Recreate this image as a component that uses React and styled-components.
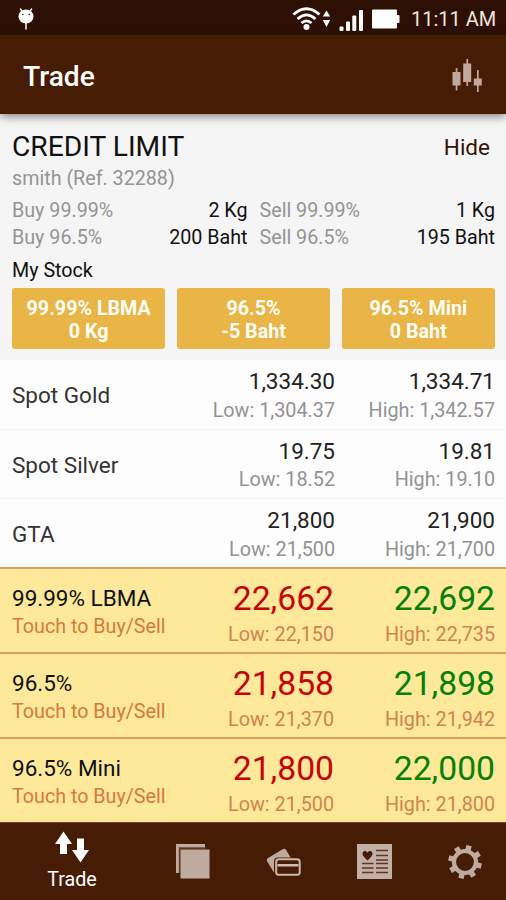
import React from "react";
import styled, { createGlobalStyle } from "styled-components";

const GlobalStyle = createGlobalStyle`
  * {
    box-sizing: border-box;
  }
  body {
    margin: 0;
    background: #fff;
    font-family: Roboto, "Liberation Sans", sans-serif;
  }
`;

const Screen = styled.div`
  width: 506px;
  height: 900px;
  display: flex;
  flex-direction: column;
  overflow: hidden;
  background: #fdfdfd;
`;

const StatusBar = styled.div`
  height: 35px;
  flex: none;
  display: flex;
  align-items: center;
  justify-content: space-between;
  padding: 2px 10px 0 17px;
  background: #2d1003;
  color: #fff;
`;

const StatusIcons = styled.div`
  display: flex;
  align-items: center;
`;

const Clock = styled.span`
  width: 85px;
  margin-left: 11px;
  font-size: 20px;
  line-height: 30px;
  color: #eee4de;
  white-space: nowrap;
`;

const AppBar = styled.header`
  height: 78.5px;
  flex: none;
  display: flex;
  align-items: center;
  justify-content: space-between;
  padding: 4px 24px 0 23px;
  background: #471c05;
  box-shadow: 0 2px 9px rgba(0, 0, 0, 0.5);
  z-index: 1;
`;

const Title = styled.h1`
  margin: 0;
  font-size: 28.2px;
  font-weight: 500;
  color: #fff;
`;

const Credit = styled.section`
  height: 246.5px;
  flex: none;
  padding: 16px 11px 0 12px;
  background: #f5f5f5;
`;

const CreditHead = styled.div`
  display: flex;
  justify-content: space-between;
  line-height: 33px;
`;

const CreditTitle = styled.h2`
  margin: 0;
  font-size: 28.2px;
  font-weight: 400;
  color: #111;
`;

const HideButton = styled.button`
  border: 0;
  padding: 2px 5px 0 0;
  background: none;
  font: inherit;
  font-size: 22.5px;
  line-height: 30px;
  color: #33150b;
`;

const Account = styled.div`
  font-size: 19.7px;
  line-height: 31px;
  color: #949494;
`;

const Limits = styled.div`
  display: grid;
  grid-template-columns: 235.5px 235.5px;
  column-gap: 12px;
  padding-top: 3px;
  font-size: 19.7px;
  line-height: 27px;
`;

const Limit = styled.div`
  display: flex;
  justify-content: space-between;
  color: #111;
`;

const LimitLabel = styled.span`
  color: #949494;
`;

const StockTitle = styled.h3`
  margin: 0;
  padding-top: 2px;
  font-size: 19.7px;
  font-weight: 400;
  line-height: 35px;
  color: #111;
`;

const Stocks = styled.div`
  display: grid;
  grid-template-columns: repeat(3, 1fr);
  gap: 11.5px;
`;

const Stock = styled.div`
  height: 61px;
  padding-top: 9px;
  border-radius: 3px;
  background: #e8b546;
  color: #fffdf6;
  font-size: 19.7px;
  font-weight: 700;
  line-height: 23.4px;
  text-align: center;
`;

const Row = styled.div`
  height: 69.5px;
  flex: none;
  display: grid;
  grid-template-columns: 1fr 160px 160px;
  align-items: start;
  padding: 8px 11px 0 12px;
  border-bottom: 1px solid #f2f2f2;
  background: #fdfdfd;
`;

const GoldRow = styled(Row)`
  height: 85px;
  grid-template-columns: 1fr 160px 161px;
  padding-top: 11px;
  border-top: 2px solid #dca062;
  border-bottom: 0;
  background: #fee899;
`;

const SpotList = styled.section`
  height: 207px;
  flex: none;
  overflow: hidden;
`;

const Name = styled.div`
  padding-top: 13px;
  font-size: 22.5px;
  line-height: 28px;
  color: #333;
`;

const GoldName = styled(Name)`
  padding-top: 4px;
  color: #111;
`;

const Hint = styled.div`
  font-size: 19.7px;
  line-height: 29px;
  color: #d9783f;
`;

const Quote = styled.div`
  text-align: right;
  white-space: nowrap;
`;

const Price = styled.div`
  font-size: ${(p) => (p.$big ? "33.7px" : "22.5px")};
  line-height: ${(p) => (p.$big ? "37px" : "27.5px")};
  color: ${(p) => p.$color || "#222"};
`;

const Range = styled.div`
  font-size: 19.8px;
  line-height: ${(p) => (p.$gold ? "35px" : "29px")};
  color: ${(p) => (p.$gold ? "#d08450" : "#939393")};
`;

const TabBar = styled.nav`
  flex: 1;
  display: flex;
  border-top: 1px solid #7a4a25;
  background: #471c05;
`;

const Tab = styled.button`
  flex: 1;
  display: flex;
  align-items: center;
  justify-content: center;
  border: 0;
  padding: 0 0 0 8px;
  background: none;
  color: #bfaaa0;
`;

const ActiveTab = styled(Tab)`
  flex: 0 0 144px;
  flex-direction: column;
  padding: 2px 0 0;
  gap: 3px;
  color: #fff;
`;

const TabLabel = styled.span`
  font-family: Roboto, "Liberation Sans", sans-serif;
  font-size: 19.7px;
  line-height: 28px;
`;

const spots = [
  { name: "Spot Gold", bid: "1,334.30", low: "1,304.37", ask: "1,334.71", high: "1,342.57" },
  { name: "Spot Silver", bid: "19.75", low: "18.52", ask: "19.81", high: "19.10" },
  { name: "GTA", bid: "21,800", low: "21,500", ask: "21,900", high: "21,700" },
];

const golds = [
  { name: "99.99% LBMA", bid: "22,662", low: "22,150", ask: "22,692", high: "22,735" },
  { name: "96.5%", bid: "21,858", low: "21,370", ask: "21,898", high: "21,942" },
  { name: "96.5% Mini", bid: "21,800", low: "21,500", ask: "22,000", high: "21,800" },
];

const limits = [
  ["Buy 99.99%", "2 Kg"],
  ["Sell 99.99%", "1 Kg"],
  ["Buy 96.5%", "200 Baht"],
  ["Sell 96.5%", "195 Baht"],
];

const stocks = [
  ["99.99% LBMA", "0 Kg"],
  ["96.5%", "-5 Baht"],
  ["96.5% Mini", "0 Baht"],
];

const DebugIcon = () => (
  <svg width="18" height="24" viewBox="0 0 18 24">
    <path d="M3.500 2l2 3M14.500 2l-2 3M9 14v8" stroke="#fff" strokeWidth="1.500" strokeLinecap="round" />
    <ellipse cx="9" cy="9.500" rx="7.500" ry="7" fill="#fff" />
    <circle cx="5.800" cy="7.500" r="0.800" fill="#2d1003" />
    <circle cx="12.200" cy="7.500" r="0.800" fill="#2d1003" />
  </svg>
);

// wifi, data arrows, signal bars and battery
const ConnectionIcons = () => (
  <svg width="108" height="26" viewBox="293 5 108 26">
    <g fill="none" stroke="#fff" strokeWidth="2.800">
      <path d="M294.500 13.500q13-11.500 26 0" />
      <path d="M298.500 18q9-8.300 18 0" />
      <path d="M302.500 22q5-4.300 10 0" />
    </g>
    <circle cx="307.500" cy="26" r="3" fill="#fff" />
    <path d="M323.800 15.500l3.700-6 3.700 6zM323.800 19l3.700 7 3.700-7z" fill="#fff" />
    <g fill="#fff">
      <rect x="340.500" y="25.500" width="4" height="4.500" rx="1" />
      <rect x="347" y="20.500" width="4" height="9.500" rx="1" />
      <rect x="353.300" y="14.500" width="4" height="15.500" rx="1" />
      <rect x="360" y="9" width="4" height="21" rx="1" />
      <rect x="373" y="8.500" width="25" height="19" rx="1" />
      <rect x="397" y="14" width="3.500" height="8" rx="1" />
    </g>
  </svg>
);

const CandlesIcon = () => (
  <svg width="30" height="34" viewBox="0 0 30 34" fill="#c2a79c">
    <rect x="0.500" y="13" width="8" height="13.500" />
    <rect x="3.700" y="9" width="1.700" height="22.500" />
    <rect x="11.200" y="4.500" width="8" height="18.500" />
    <rect x="14.400" y="0" width="1.700" height="27" />
    <rect x="21.800" y="19.500" width="8" height="7" />
    <rect x="25" y="11" width="1.700" height="22" />
  </svg>
);

const TradeIcon = () => (
  <svg width="34" height="32" viewBox="0 0 34 32" fill="currentColor">
    <path d="M8.500 0.500l8.500 12.500h-5v10h-7v-10h-5z" />
    <path d="M25.500 31.500l-8.500-12.500h5v-11.500h7v11.500h5z" />
  </svg>
);

const PagesIcon = () => (
  <svg width="34" height="35" viewBox="0 0 34 35">
    <path d="M0 0h29v4H4v25H0z" fill="#bfaaa0" />
    <path d="M3.500 29V4H29.500" fill="none" stroke="#65412d" strokeWidth="1.500" />
    <rect x="4.500" y="5.500" width="29" height="29" fill="#bfaaa0" />
  </svg>
);

const CardsIcon = () => (
  <svg width="35" height="28" viewBox="0 0 35 28">
    <rect x="2.500" y="4.500" width="22" height="18" rx="2.500" transform="rotate(-31 13.500 12.500)" fill="#bfaaa0" />
    <rect x="8" y="9.500" width="27" height="18.500" rx="4" fill="#471c05" />
    <rect x="10.200" y="11.200" width="23.500" height="15.500" rx="2.500" fill="#471c05" stroke="#cdb7ab" strokeWidth="2" />
    <rect x="11.500" y="16" width="21" height="2.500" fill="#d3bcae" />
  </svg>
);

const ReportIcon = () => (
  <svg width="35" height="35" viewBox="0 0 35 35">
    <rect width="35" height="35" fill="#c2afa5" />
    <path
      d="M10.500 16.500C7.500 13.500 5.500 12 5.500 9.500c0-3 3.700-3.500 5-.8 1.300-2.700 5-2.200 5 .8 0 2.500-2 4-5 7z"
      fill="#471c05"
    />
    <path
      d="M19 6.500h12M19 11.500h12M19 16h12M5 19.500h11.500M19 19.500h12M5 24h11.500M19 24h12M5 28.500h11.500M19 28.500h12"
      stroke="#5d3520"
      strokeWidth="1.700"
    />
  </svg>
);

const GearIcon = () => (
  <svg width="36" height="36" viewBox="-18 -18 36 36">
    <circle r="11" fill="none" stroke="#bfaaa0" strokeWidth="4.200" />
    {[14, 59, 104, 149, 194, 239, 284, 329].map((angle) => (
      <path key={angle} d="M-2.700-12h5.400v-4.800h-5.400z" fill="#bfaaa0" transform={`rotate(${angle})`} />
    ))}
  </svg>
);

function SpotRow({ item }) {
  return (
    <Row>
      <Name>{item.name}</Name>
      <Quote>
        <Price>{item.bid}</Price>
        <Range>Low: {item.low}</Range>
      </Quote>
      <Quote>
        <Price>{item.ask}</Price>
        <Range>High: {item.high}</Range>
      </Quote>
    </Row>
  );
}

function TradeRow({ item }) {
  return (
    <GoldRow>
      <div>
        <GoldName>{item.name}</GoldName>
        <Hint>Touch to Buy/Sell</Hint>
      </div>
      <Quote>
        <Price $big $color="#c4060b">
          {item.bid}
        </Price>
        <Range $gold>Low: {item.low}</Range>
      </Quote>
      <Quote>
        <Price $big $color="#078007">
          {item.ask}
        </Price>
        <Range $gold>High: {item.high}</Range>
      </Quote>
    </GoldRow>
  );
}

export default function App() {
  return (
    <Screen>
      <GlobalStyle />
      <StatusBar>
        <DebugIcon />
        <StatusIcons>
          <ConnectionIcons />
          <Clock>11:11 AM</Clock>
        </StatusIcons>
      </StatusBar>
      <AppBar>
        <Title>Trade</Title>
        <CandlesIcon />
      </AppBar>

      <Credit>
        <CreditHead>
          <CreditTitle>CREDIT LIMIT</CreditTitle>
          <HideButton>Hide</HideButton>
        </CreditHead>
        <Account>smith (Ref. 32288)</Account>
        <Limits>
          {limits.map(([label, value]) => (
            <Limit key={label}>
              <LimitLabel>{label}</LimitLabel>
              {value}
            </Limit>
          ))}
        </Limits>
        <StockTitle>My Stock</StockTitle>
        <Stocks>
          {stocks.map(([label, value]) => (
            <Stock key={label}>
              <div>{label}</div>
              <div>{value}</div>
            </Stock>
          ))}
        </Stocks>
      </Credit>

      <SpotList>
        {spots.map((item) => (
          <SpotRow key={item.name} item={item} />
        ))}
      </SpotList>
      {golds.map((item) => (
        <TradeRow key={item.name} item={item} />
      ))}

      <TabBar>
        <ActiveTab>
          <TradeIcon />
          <TabLabel>Trade</TabLabel>
        </ActiveTab>
        <Tab>
          <PagesIcon />
        </Tab>
        <Tab>
          <CardsIcon />
        </Tab>
        <Tab>
          <ReportIcon />
        </Tab>
        <Tab>
          <GearIcon />
        </Tab>
      </TabBar>
    </Screen>
  );
}
